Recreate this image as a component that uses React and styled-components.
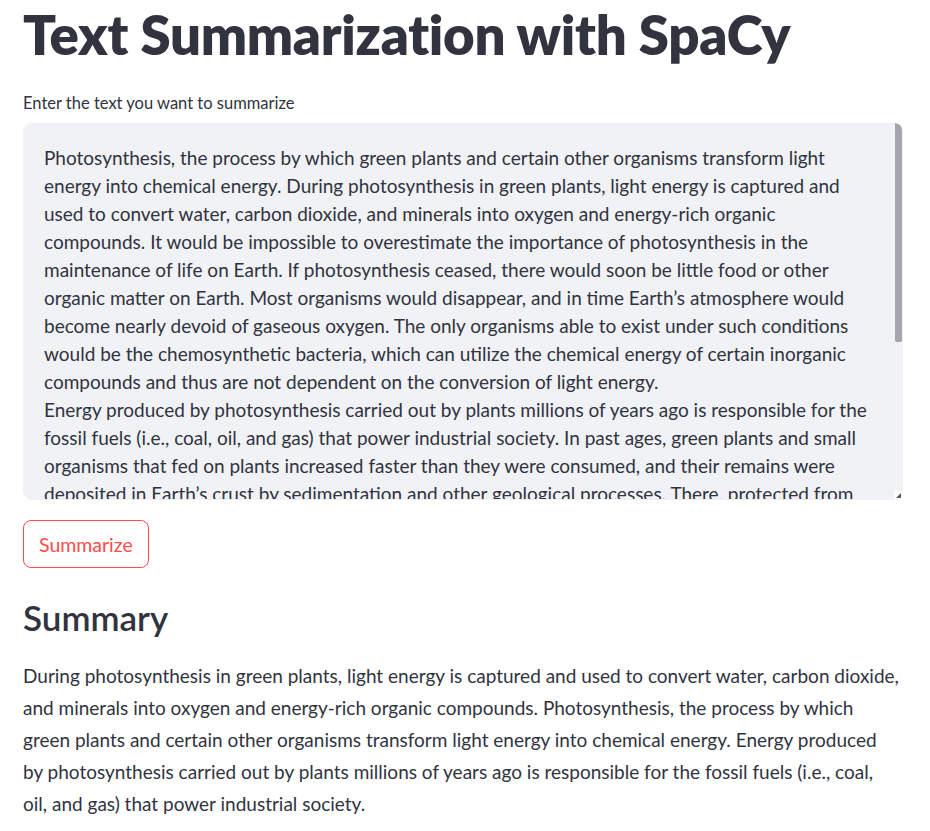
import React, { useState } from 'react'
import styled, { createGlobalStyle } from 'styled-components'

const GlobalStyle = createGlobalStyle`
  body {
    margin: 0;
    background: #ffffff;
    font-family: Lato, "Liberation Sans", sans-serif;
    color: #31333f;
  }
`

const SOURCE_TEXT =
  'Photosynthesis, the process by which green plants and certain other organisms transform light energy into chemical energy. During photosynthesis in green plants, light energy is captured and used to convert water, carbon dioxide, and minerals into oxygen and energy-rich organic compounds. It would be impossible to overestimate the importance of photosynthesis in the maintenance of life on Earth. If photosynthesis ceased, there would soon be little food or other organic matter on Earth. Most organisms would disappear, and in time Earth\u2019s atmosphere would become nearly devoid of gaseous oxygen. The only organisms able to exist under such conditions would be the chemosynthetic bacteria, which can utilize the chemical energy of certain inorganic compounds and thus are not dependent on the conversion of light energy.\n' +
  'Energy produced by photosynthesis carried out by plants millions of years ago is responsible for the fossil fuels (i.e., coal, oil, and gas) that power industrial society. In past ages, green plants and small organisms that fed on plants increased faster than they were consumed, and their remains were deposited in Earth\u2019s crust by sedimentation and other geological processes. There, protected from oxidation, these organic remains were slowly converted to fossil fuels. These fuels not only provide much of the energy used in factories, homes, and transportation but also serve as the raw material for plastics and other synthetic products. Unfortunately, modern civilization is using up in a few centuries the excess of photosynthetic production accumulated over millions of years. Consequently, the carbon dioxide that has been removed from the air to make carbohydrates in photosynthesis over millions of years is being returned at an incredibly rapid rate. The carbon dioxide concentration in Earth\u2019s atmosphere is rising the fastest it ever has in Earth\u2019s history, and this phenomenon is expected to have major implications on Earth\u2019s climate.'

// summary split where the original page wraps it
const SUMMARY_LINES = [
  'During photosynthesis in green plants, light energy is captured and used to convert water, carbon dioxide, and minerals into oxygen and energy-rich organic compounds. Photosynthesis, the process by which green plants and certain other organisms transform light energy into chemical energy. Energy produced',
  'by photosynthesis carried out by plants millions of years ago is responsible for the fossil fuels (i.e., coal,',
  'oil, and gas) that power industrial society.',
]

const Page = styled.main`
  width: 880px;
  padding: 0 23px;
`

const Title = styled.h1`
  margin: 0;
  padding: 1px 0 0;
  font-size: 54.5px;
  font-weight: 800;
  line-height: 66px;
  letter-spacing: -0.28px;
`

const Label = styled.label`
  display: block;
  margin-top: 24px;
  font-size: 16.5px;
  line-height: 24px;
`

const Field = styled.div`
  position: relative;
  margin-top: 8px;
  width: 880px;
  border-radius: 8px;
  overflow: hidden;
`

const TextBox = styled.textarea`
  display: block;
  box-sizing: border-box;
  width: 100%;
  height: 377px;
  padding: 20px 25px 20px 20px;
  border: 1px solid #f0f2f6;
  border-radius: 8px 8px 0 8px;
  background: #f0f2f6;
  color: #31333f;
  font-family: inherit;
  font-size: 19px;
  line-height: 28px;
  resize: none;
  outline: none;
`

/* hand-drawn scrollbar and resize corner, laid over the text box */
const ScrollThumb = styled.div`
  position: absolute;
  top: 0;
  right: 1px;
  width: 7px;
  height: 219px;
  background: #a5a5ad;
  border-radius: 0 8px 2px 2px;
`

const ResizeCorner = styled.div`
  position: absolute;
  right: 0;
  bottom: 0;
  width: 9px;
  height: 9px;
  background: #ffffff;
  display: flex;
  align-items: center;
  justify-content: center;
`

const Button = styled.button`
  margin-top: 20px;
  height: 48px;
  padding: 0 15px;
  border: 1px solid #ff4b4b;
  border-radius: 8px;
  background: #ffffff;
  color: #ff4b4b;
  font-family: inherit;
  font-size: 19.5px;
  cursor: pointer;
`

const Subheader = styled.h3`
  margin: 27px 0 0;
  font-size: 35px;
  font-weight: 600;
  line-height: 44px;
`

const Paragraph = styled.p`
  margin: 21px 0 0;
  font-size: 19px;
  line-height: 32px;
`

export default function App() {
  const [text, setText] = useState(SOURCE_TEXT)
  return (
    <>
      <GlobalStyle />
      <Page>
        <Title>Text Summarization with SpaCy</Title>
        <Label htmlFor="src">Enter the text you want to summarize</Label>
        <Field>
          <TextBox id="src" value={text} onChange={e => setText(e.target.value)} />
          <ScrollThumb />
          <ResizeCorner>
            <svg width="6" height="6" viewBox="0 0 6 6">
              <path d="M5 0v5H0z" fill="#555" />
            </svg>
          </ResizeCorner>
        </Field>
        <Button type="button">Summarize</Button>
        <Subheader>Summary</Subheader>
        <Paragraph>
          {SUMMARY_LINES.map((line, i) => (
            <React.Fragment key={i}>
              {i > 0 && <br />}
              {line}
            </React.Fragment>
          ))}
        </Paragraph>
      </Page>
    </>
  )
}
